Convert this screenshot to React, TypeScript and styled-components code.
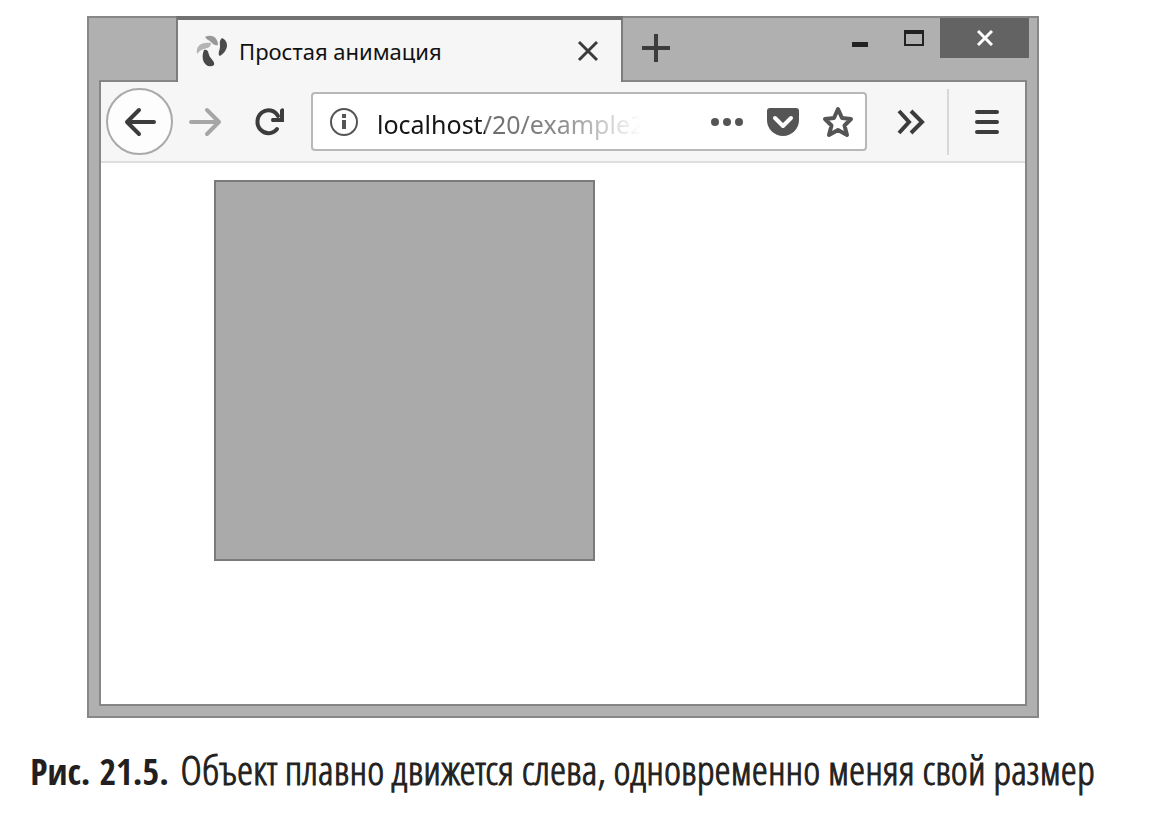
import React from 'react';
import styled, { createGlobalStyle } from 'styled-components';

const GlobalStyle = createGlobalStyle`
  *, *::before, *::after { box-sizing: border-box; }
  body { margin: 0; background: #fff; color: #231f20; }
  svg { display: block; flex: none; }
`;

const Figure = styled.figure`
  margin: 0;
  padding: 16px 36px 16px 11px;
`;

const BrowserWindow = styled.section`
  margin: 0 75px 0 76px;
  padding: 0 10px 10px;
  background: #b0b0b0;
  border: 2px solid #878787;
  font-family: "Noto Sans", "Open Sans", sans-serif;
`;

const TitleBar = styled.header`
  display: flex;
  height: 62px;
  padding-left: 77px;
`;

const Tab = styled.div`
  position: relative;
  display: flex;
  align-items: center;
  flex: 0 1 447px;
  min-width: 0;
  height: 66px;
  margin-top: -2px;
  padding: 0 22px 0 18px;
  background: #f6f6f6;
  border: 2px solid #7c7c7c;
  border-top: 4px solid #717171;
  border-bottom: 0;
`;

const TabTitle = styled.span`
  flex: 1;
  margin-left: 11px;
  font-size: 22px;
  line-height: 30px;
  white-space: nowrap;
  overflow: hidden;
  color: #111;
`;

const IconButton = styled.button<{ $width: number; $height?: number }>`
  display: flex;
  align-items: center;
  justify-content: center;
  flex: none;
  width: ${(p) => p.$width}px;
  height: ${(p) => p.$height ?? 40}px;
  padding: 0;
  border: 0;
  background: none;
  color: #3c3c3c;
`;

const NewTabButton = styled(IconButton)`
  margin: 0 auto 0 0;
`;

const CloseButton = styled(IconButton)`
  margin: 0 -2px 0 0;
  background: #636363;
  color: #fff;
`;

const Client = styled.div`
  border: 2px solid #868686;
  background: #fff;
`;

const Toolbar = styled.nav`
  display: flex;
  align-items: center;
  height: 81px;
  padding: 0 0 0 5px;
  background: #f6f6f6;
  border-bottom: 2px solid #dedede;
`;

const BackButton = styled(IconButton)`
  border: 2px solid #a9a9a9;
  border-radius: 50%;
  background: #fdfdfd;
`;

const AddressBar = styled.div`
  display: flex;
  align-items: center;
  flex: 1;
  min-width: 0;
  height: 59px;
  margin: 0 7px 0 10px;
  padding: 0 0 0 11px;
  background: #fff;
  border: 2px solid #b8b8b8;
  border-radius: 4px;
`;

const AddressInput = styled.input`
  flex: 0 1 266px;
  width: 0;
  min-width: 0;
  height: 40px;
  margin: 4px auto 0 13px;
  padding: 0;
  border: 0;
  outline: 0;
  font: 25px/32px "Noto Sans", "Open Sans", sans-serif;
  color: transparent;
  background: linear-gradient(to right, #151515 108px, #6a6a6a 108px, #8a8a8a 184px, #fff 264px);
  background-clip: text;
  -webkit-background-clip: text;
`;

const Divider = styled.div`
  width: 2px;
  height: 66px;
  background: #d8d8d8;
`;

const Page = styled.main`
  height: 541px;
  padding: 17px 0 0 113px;
`;

const AnimatedBox = styled.div`
  width: 381px;
  height: 381px;
  background: #aaa;
  border: 2px solid #7a7a7a;
`;

const Caption = styled.figcaption`
  margin-top: 27px;
  font: 300 41px/48px "Open Sans Condensed Light", "Open Sans Condensed", sans-serif;
  text-align: center;
  -webkit-text-stroke: 1px currentColor;
`;

const FigureNumber = styled.b`
  margin-right: 4px;
  font: 700 36px/48px "Open Sans Condensed", sans-serif;
  -webkit-text-stroke: 0;
`;

const stroke = { fill: 'none', stroke: 'currentColor' } as const;

const Favicon = () => (
  <svg width="32" height="34" viewBox="0 0 32 34" aria-hidden="true">
    <path d="M1 20C0 12 4 8 15 9C15 13 12 14 8 15C4 16 3 18 1 20Z" fill="#b4b4b4" />
    <path d="M9 3C15 0 22 3 22 11C19 12 17 10 15 8C13 6 11 6 9 3Z" fill="#989898" />
    <path d="M26 4C33 7 33 16 24 22C21 20 24 16 24 13C24 9 23 7 26 4Z" fill="#4b4b4b" />
    <path d="M8 16C13 15 12 20 14 23C16 26 19 28 18 31C13 35 3 29 8 16Z" fill="#484848" />
  </svg>
);

export default function App() {
  return (
    <>
      <GlobalStyle />
      <Figure>
        <BrowserWindow aria-label="Браузер">
          <TitleBar>
            <Tab>
              <Favicon />
              <TabTitle>Простая анимация</TabTitle>
              <IconButton $width={22} aria-label="Закрыть вкладку">
                <svg width="22" height="22" viewBox="0 0 22 22" {...stroke} strokeWidth="3">
                  <path d="M2 2L20 20M20 2L2 20" />
                </svg>
              </IconButton>
            </Tab>
            <NewTabButton $width={66} $height={60} aria-label="Новая вкладка">
              <svg width="28" height="28" viewBox="0 0 28 28" {...stroke} strokeWidth="4">
                <path d="M14 0V28M0 14H28" />
              </svg>
            </NewTabButton>
            <IconButton $width={54} $height={42} aria-label="Свернуть">
              <svg width="18" height="18" viewBox="0 0 18 18">
                <path d="M1 12H17V17H1Z" fill="#222" />
              </svg>
            </IconButton>
            <IconButton $width={53} aria-label="Развернуть">
              <svg width="20" height="18" viewBox="0 0 20 18" fill="none" stroke="#222" strokeWidth="2">
                <path d="M1 3H19V16H1Z" />
                <path d="M0 3H20" strokeWidth="4" />
              </svg>
            </IconButton>
            <CloseButton $width={89} aria-label="Закрыть">
              <svg width="16" height="16" viewBox="0 0 16 16" {...stroke} strokeWidth="3">
                <path d="M1 1L15 15M15 1L1 15" />
              </svg>
            </CloseButton>
          </TitleBar>
          <Client>
            <Toolbar>
              <BackButton $width={67} $height={67} aria-label="Назад">
                <svg width="32" height="30" viewBox="0 0 32 30" {...stroke} strokeWidth="4" strokeLinecap="round" strokeLinejoin="round">
                  <path d="M15 3L3 15L15 27M3 15H30" />
                </svg>
              </BackButton>
              <IconButton $width={64} aria-label="Вперёд">
                <svg width="34" height="30" viewBox="0 0 34 30" fill="none" stroke="#a6a6a6" strokeWidth="4" strokeLinecap="round" strokeLinejoin="round">
                  <path d="M19 3L31 15L19 27M3 15H31" />
                </svg>
              </IconButton>
              <IconButton $width={64} aria-label="Обновить">
                <svg width="30" height="30" viewBox="0 0 30 30" {...stroke}>
                  <path d="M24 9A11 11.500 0 1 0 23 22" strokeWidth="4" strokeLinecap="round" />
                  <path d="M30 2Q28 0 26 3V11H18Q16 13 18 15H30Z" fill="currentColor" stroke="none" />
                </svg>
              </IconButton>
              <AddressBar>
                <IconButton $width={40} aria-label="Сведения о сайте">
                  <svg width="28" height="28" viewBox="0 0 28 28" fill="none" stroke="#555">
                    <circle cx="14" cy="14" r="13" strokeWidth="2" />
                    <path d="M14 12V21M14 6V10" strokeWidth="4" />
                  </svg>
                </IconButton>
                <AddressInput aria-label="Адрес" defaultValue="localhost/20/example21" />
                <IconButton $width={56} aria-label="Действия на странице">
                  <svg width="34" height="10" viewBox="0 0 34 10" fill="#555">
                    <circle cx="5" cy="5" r="4" />
                    <circle cx="17" cy="5" r="4" />
                    <circle cx="29" cy="5" r="4" />
                  </svg>
                </IconButton>
                <IconButton $width={56} aria-label="Сохранить в Pocket">
                  <svg width="32" height="28" viewBox="0 0 32 28">
                    <path d="M3 0H29Q32 0 32 3V12A16 16 0 0 1 0 12V3Q0 0 3 0Z" fill="#555" />
                    <path d="M8 10L16 18L24 10" fill="none" stroke="#fff" strokeWidth="4" strokeLinecap="round" strokeLinejoin="round" />
                  </svg>
                </IconButton>
                <IconButton $width={54} aria-label="Добавить в закладки">
                  <svg width="32" height="32" viewBox="0 0 32 32" fill="none" stroke="#555" strokeWidth="4" strokeLinejoin="round">
                    <path d="M16 3L20 12L29 13L22.500 19.500L25 29L16 24L7 29L9.500 19.500L3 13L12 12Z" />
                  </svg>
                </IconButton>
              </AddressBar>
              <IconButton $width={73} aria-label="Дополнительные инструменты">
                <svg width="28" height="26" viewBox="0 0 28 26" {...stroke} strokeWidth="4">
                  <path d="M2 2L12 13L2 24M14 2L25 13L14 24" />
                </svg>
              </IconButton>
              <Divider />
              <IconButton $width={76} aria-label="Меню">
                <svg width="24" height="24" viewBox="0 0 24 24" {...stroke} strokeWidth="4" strokeLinecap="round">
                  <path d="M2 2H22M2 12H22M2 22H22" />
                </svg>
              </IconButton>
            </Toolbar>
            <Page>
              <AnimatedBox />
            </Page>
          </Client>
        </BrowserWindow>
        <Caption>
          <FigureNumber>Рис. 21.5.</FigureNumber> Объект плавно движется слева, одновременно меняя свой размер
        </Caption>
      </Figure>
    </>
  );
}
